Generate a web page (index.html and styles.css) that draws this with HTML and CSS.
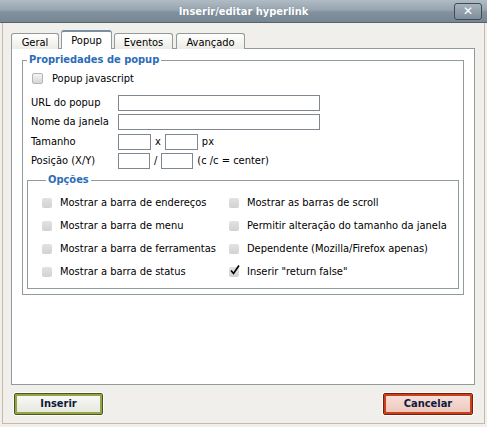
FILE: index.html
```html
<!DOCTYPE html>
<html>
<head>
<meta charset="utf-8">
<link rel="stylesheet" href="styles.css">
</head>
<body>
<div class="win">
  <div class="titlebar">
    <span></span>
    <span class="title">Inserir/editar hyperlink</span>
    <span class="close">✕</span>
  </div>
  <div class="frame">
    <div class="tabs">
      <div class="tab t-geral">Geral</div>
      <div class="tab active t-popup">Popup</div>
      <div class="tab t-eventos">Eventos</div>
      <div class="tab t-avancado">Avançado</div>
    </div>
    <div class="panel">
      <fieldset class="fs fs-props">
        <legend>Propriedades de popup</legend>
        <div class="row row-check">
          <span class="cb cb-enabled"></span>
          <span class="cb-label">Popup javascript</span>
        </div>
        <div class="row row-first">
          <span class="lbl">URL do popup</span>
          <span class="inp inp-long"></span>
        </div>
        <div class="row">
          <span class="lbl">Nome da janela</span>
          <span class="inp inp-long"></span>
        </div>
        <div class="row row-size">
          <span class="lbl">Tamanho</span>
          <span class="inp inp-s33"></span>
          <span class="sep">x</span>
          <span class="inp inp-s33"></span>
          <span class="sep">px</span>
        </div>
        <div class="row">
          <span class="lbl">Posição (X/Y)</span>
          <span class="inp inp-s32"></span>
          <span class="sep">/</span>
          <span class="inp inp-s32"></span>
          <span class="sep">(c /c = center)</span>
        </div>
        <fieldset class="fs fs-opts">
          <legend>Opções</legend>
          <div class="opts">
            <div class="opt"><span class="cb"></span><span>Mostrar a barra de endereços</span></div>
            <div class="opt"><span class="cb"></span><span>Mostrar as barras de scroll</span></div>
            <div class="opt"><span class="cb"></span><span>Mostrar a barra de menu</span></div>
            <div class="opt"><span class="cb"></span><span>Permitir alteração do tamanho da janela</span></div>
            <div class="opt"><span class="cb"></span><span>Mostrar a barra de ferramentas</span></div>
            <div class="opt"><span class="cb"></span><span>Dependente (Mozilla/Firefox apenas)</span></div>
            <div class="opt"><span class="cb"></span><span>Mostrar a barra de status</span></div>
            <div class="opt"><span class="cb cb-checked"><svg class="tick" width="12" height="12" viewBox="0 0 12 12"><path d="M2 6.5 L4.5 9.5 L10 1.5" fill="none" stroke="#000" stroke-width="1.6"/></svg></span><span>Inserir "return false"</span></div>
          </div>
        </fieldset>
      </fieldset>
    </div>
    <div class="buttons">
      <div class="btn btn-ok">Inserir</div>
      <div class="btn btn-cancel">Cancelar</div>
    </div>
  </div>
</div>
</body>
</html>
```

FILE: styles.css
```css
html, body {
  margin: 0;
  padding: 0;
  background: #f0efeb;
}
body {
  font-family: "DejaVu Sans Condensed", "DejaVu Sans", sans-serif;
  font-size: 11px;
  color: #000;
}
.win {
  width: 487px;
  height: 427px;
  display: flex;
  flex-direction: column;
  box-sizing: border-box;
  background: #f0efeb;
}
.titlebar {
  height: 22px;
  flex: none;
  display: grid;
  grid-template-columns: 1fr auto 1fr;
  align-items: center;
  background: linear-gradient(to bottom, #b0bbc4 0%, #97a5b0 45%, #82919d 55%, #778693 100%);
  border-bottom: 1px solid #55636e;
}
.title {
  color: #fff;
  font-weight: bold;
  font-size: 11px;
  text-shadow: 0 0 1px #6c7a86;
}
.close {
  justify-self: end;
  margin-right: 5px;
  width: 28px;
  height: 17px;
  box-sizing: border-box;
  border: 1px solid #3f4c57;
  border-radius: 3px;
  background: linear-gradient(to bottom, #a7b3bd, #7f8e9a);
  color: #fff;
  font-weight: bold;
  font-size: 12px;
  line-height: 15px;
  text-align: center;
  font-family: "DejaVu Sans", sans-serif;
}
.frame {
  flex: 1;
  margin: 0 2px 3px 2px;
  border-left: 1px solid #c9b8a6;
  border-right: 1px solid #c9b8a6;
  border-bottom: 1px solid #c9b8a6;
  padding: 7px 9px 0 8px;
  display: flex;
  flex-direction: column;
}
.tabs {
  display: flex;
  align-items: flex-end;
  gap: 2px;
  height: 19px;
  margin-bottom: -1px;
  position: relative;
  z-index: 1;
}
.tab {
  height: 16px;
  box-sizing: border-box;
  border: 1px solid #919b9c;
  border-bottom: none;
  border-radius: 3px 3px 0 0;
  background: linear-gradient(to bottom, #ffffff, #ecebe5);
  text-align: center;
  line-height: 16px;
  padding-top: 1px;
}
.t-geral { width: 48px; }
.t-popup { width: 51px; }
.t-eventos { width: 59px; }
.t-avancado { width: 69px; margin-left: 1px; }
.tab.active {
  height: 19px;
  background: #fff;
  border-top: 2px solid #7b8fa3;
  line-height: 16px;
  padding-top: 1px;
}
.panel {
  height: 337px;
  box-sizing: border-box;
  border: 1px solid #919b9c;
  background: #fff;
  padding: 4px 10px 0 10px;
}
.fs {
  border: 1px solid #919b9c;
  margin: 0;
  padding: 0;
}
.fs legend {
  color: #2b6db8;
  font-weight: bold;
  padding: 0 2px;
  margin-left: 4px;
  line-height: 14px;
}
.fs-props {
  padding: 0 0 5px 0;
}
.row {
  display: flex;
  align-items: center;
  height: 19px;
  padding-left: 8px;
}
.row-check {
  margin-top: 2px;
  padding-left: 9px;
}
.row-first {
  margin-top: 5px;
}
.row-size {
  margin-top: 1px;
}
.lbl {
  width: 87px;
  flex: none;
}
.inp {
  height: 16px;
  box-sizing: border-box;
  border: 1px solid #7f8890;
  background: #fff;
  flex: none;
}
.inp-long { width: 202px; }
.inp-s33 { width: 33px; }
.inp-s32 { width: 32px; }
.sep { margin: 0 4px; }
.cb {
  width: 10px;
  height: 10px;
  flex: none;
  box-sizing: border-box;
  border-radius: 2px;
  background: linear-gradient(to bottom, #e2e2e2, #d2d2d2);
  position: relative;
}
.cb-enabled {
  width: 11px;
  height: 11px;
  border: 1px solid #b4b4b4;
  background: linear-gradient(to bottom, #f4f4f4, #d6d6d6);
}
.cb-label {
  margin-left: 9px;
}
.tick {
  position: absolute;
  left: 0;
  top: -3px;
}
.fs-opts {
  margin: 3px 4px 0 4px;
  padding: 4px 0 5px 14px;
}
.opts {
  display: grid;
  grid-template-columns: 187px auto;
  grid-auto-rows: 23px;
}
.opt {
  display: flex;
  align-items: center;
  gap: 8px;
}
.buttons {
  display: flex;
  justify-content: space-between;
  padding: 8px 2px 0 2px;
}
.btn {
  height: 22px;
  box-sizing: border-box;
  font-weight: bold;
  font-size: 11px;
  color: #0e1a3c;
  text-align: center;
  line-height: 20px;
  border-radius: 2px;
}
.btn-ok {
  width: 89px;
  margin-left: 1px;
  border: 1px solid #4b5619;
  box-shadow: 0 0 0 1px #fff, inset 0 0 0 2px #94a44a;
  background: linear-gradient(to bottom, #fbfbf7, #e4e7dc);
}
.btn-cancel {
  width: 90px;
  border: 1px solid #7a200a;
  box-shadow: 0 0 0 1px #fff, inset 0 0 0 2px #c9411c;
  background: linear-gradient(to bottom, #f9e2dc, #ecc5b9);
}
```
